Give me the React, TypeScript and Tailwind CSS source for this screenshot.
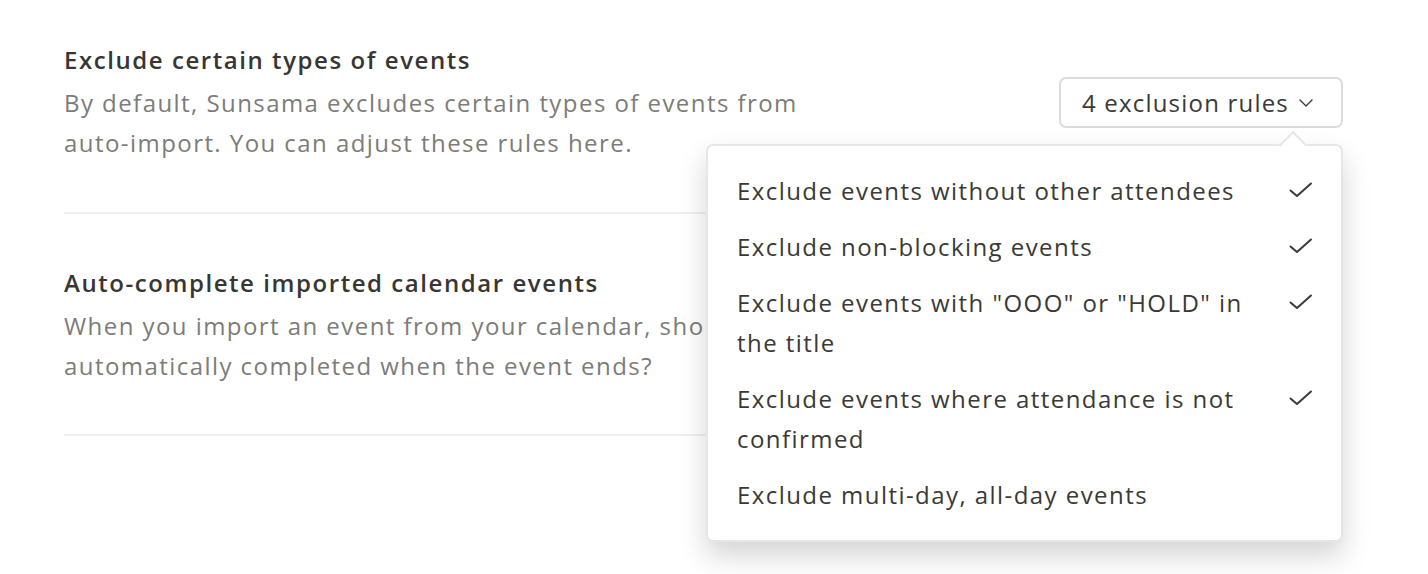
const rules = [
  { label: "Exclude events without other attendees", on: true },
  { label: "Exclude non-blocking events", on: true },
  { label: 'Exclude events with "OOO" or "HOLD" in the title', on: true },
  { label: "Exclude events where attendance is not confirmed", on: true },
  { label: "Exclude multi-day, all-day events", on: false },
];

function Check() {
  return (
    <svg width="24" height="16" viewBox="0 0 24 16" fill="none" className="shrink-0">
      <path d="M1.5 8.5 L8 14 L22 1.5" stroke="#3b3a36" strokeWidth="2" strokeLinecap="round" strokeLinejoin="round" />
    </svg>
  );
}

function Chevron() {
  return (
    <svg width="14" height="8" viewBox="0 0 14 8" fill="none">
      <path d="M1 1 L7 7 L13 1" stroke="#3b3a36" strokeWidth="1.4" strokeLinecap="round" strokeLinejoin="round" />
    </svg>
  );
}

export default function App() {
  return (
    <main
      className="min-h-screen bg-white pl-16 pr-[85px] text-[24px] tracking-[0.06em] antialiased"
      style={{ fontFamily: '"Open Sans", "Noto Sans", sans-serif' }}
    >
      {/* exclusion rules */}
      <section className="relative flex items-center justify-between border-b-2 border-[#efefef] pt-[37px] pb-[49px]">
        <div>
          <h2 className="font-semibold tracking-[0.065em] leading-[46px] text-[#373632]">Exclude certain types of events</h2>
          <p className="w-[800px] leading-[40px] text-[#7d7c78]">
            By default, Sunsama excludes certain types of events from auto-import. You can adjust these rules here.
          </p>
        </div>

        <button className="flex h-[51px] items-center gap-[10px] self-start mt-[40px] rounded-[7px] border-2 border-[#dcdcdc] bg-white pl-[21px] pr-[28px] tracking-[0.05em] text-[#3a3935]">
          <span>4 exclusion rules</span>
          <Chevron />
        </button>

        <div className="absolute right-0 top-[144px] z-10 w-[637px] rounded-[7px] border-2 border-[#e6e6e6] bg-white pt-[17px] pb-[17px] shadow-[0_14px_28px_rgba(0,0,0,0.17)]">
          <div className="absolute -top-[11px] right-[38px] h-[20px] w-[20px] rotate-45 border-l-2 border-t-2 border-[#e6e6e6] bg-white" />
          {rules.map((r) => (
            <div key={r.label} className="relative flex items-start justify-between gap-[14px] py-[8px] pl-[29px] pr-[28px]">
              <span className="leading-[40px] text-[#3a3935]">{r.label}</span>
              {r.on && (
                <span className="mt-[11px]">
                  <Check />
                </span>
              )}
            </div>
          ))}
        </div>
      </section>

      {/* auto-complete */}
      <section className="border-b-2 border-[#efefef] pt-[46px] pb-[48px]">
        <h2 className="font-semibold tracking-[0.065em] leading-[46px] text-[#373632]">Auto-complete imported calendar events</h2>
        <p className="w-[800px] leading-[40px] text-[#7d7c78]">
          When you import an event from your calendar, should it be automatically completed when the event ends?
        </p>
      </section>
    </main>
  );
}
